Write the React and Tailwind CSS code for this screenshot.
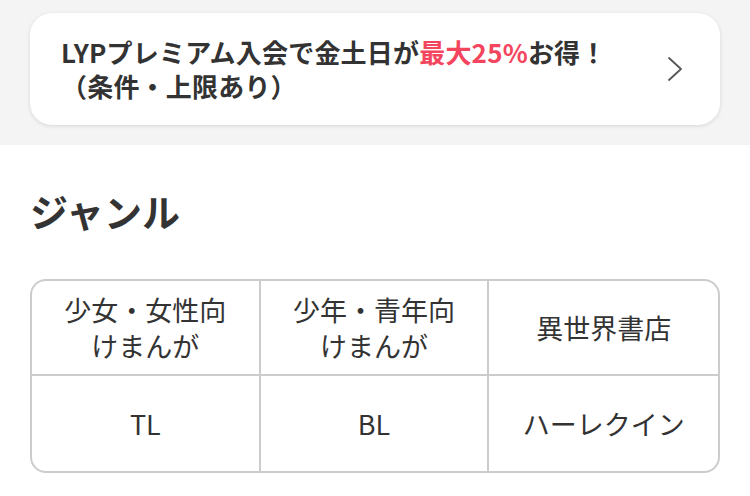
import React from "react";

const genres = [
  ["少女・女性向", "けまんが"],
  ["少年・青年向", "けまんが"],
  ["異世界書店"],
  ["TL"],
  ["BL"],
  ["ハーレクイン"],
];

export default function App() {
  return (
    <div
      className="w-[750px] h-[496px] bg-white overflow-hidden text-[#333]"
      style={{ fontFamily: '"Noto Sans CJK JP", "Noto Sans", sans-serif' }}
    >
      <div className="bg-[#f4f4f4] px-[30px] pt-[13px] pb-[20px]">
        <a className="flex items-center h-[112px] bg-white rounded-[22px] shadow-[0_1px_4px_rgba(0,0,0,0.12)] pl-[31px] pr-[36px]">
          <div className="flex-1 text-[26px] font-bold leading-[34px] tracking-[0.2px]">
            <div>
              LYPプレミアム入会で金土日が<span className="text-[#f4455e]">最大25%</span>お得！
            </div>
            <div>（条件・上限あり）</div>
          </div>
          <svg width="18" height="26" viewBox="0 0 18 26" fill="none" className="text-[#555]">
            <path d="M3 2l12 11L3 24" stroke="currentColor" strokeWidth="1.8" strokeLinecap="round" strokeLinejoin="round" />
          </svg>
        </a>
      </div>
      <div className="px-[30px]">
        <h2 className="text-[38px] font-bold leading-[56px] mt-[38px] mb-[40px]">ジャンル</h2>
        <div className="grid grid-cols-3 border-2 border-[#ccc] rounded-[16px] overflow-hidden">
          {genres.map((g, i) => (
            <div
              key={i}
              className={`h-[95px] flex flex-col items-center justify-center text-[27px] leading-[36px] text-[#333] ${i % 3 !== 2 ? "border-r-2 border-[#ccc]" : ""} ${i < 3 ? "border-b-2 border-[#ccc]" : ""}`}
            >
              {g.map((l, j) => (
                <span key={j}>{l}</span>
              ))}
            </div>
          ))}
        </div>
      </div>
    </div>
  );
}
